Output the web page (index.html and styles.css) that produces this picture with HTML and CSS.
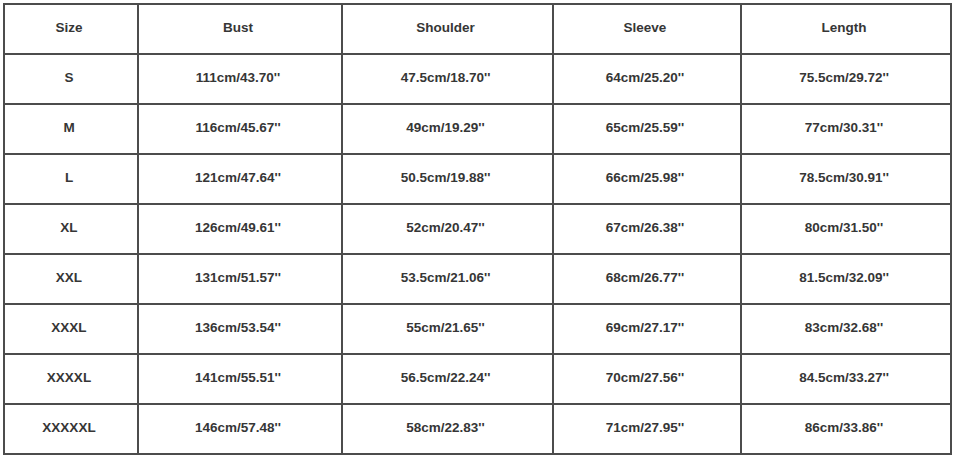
FILE: index.html
```html
<!DOCTYPE html>
<html>
<head>
<meta charset="utf-8">
<link rel="stylesheet" href="styles.css">
</head>
<body>
<div class="chart">
  <div class="cell">Size</div><div class="cell">Bust</div><div class="cell">Shoulder</div><div class="cell">Sleeve</div><div class="cell">Length</div>
  <div class="cell">S</div><div class="cell">111cm/43.70''</div><div class="cell">47.5cm/18.70''</div><div class="cell">64cm/25.20''</div><div class="cell">75.5cm/29.72''</div>
  <div class="cell">M</div><div class="cell">116cm/45.67''</div><div class="cell">49cm/19.29''</div><div class="cell">65cm/25.59''</div><div class="cell">77cm/30.31''</div>
  <div class="cell">L</div><div class="cell">121cm/47.64''</div><div class="cell">50.5cm/19.88''</div><div class="cell">66cm/25.98''</div><div class="cell">78.5cm/30.91''</div>
  <div class="cell">XL</div><div class="cell">126cm/49.61''</div><div class="cell">52cm/20.47''</div><div class="cell">67cm/26.38''</div><div class="cell">80cm/31.50''</div>
  <div class="cell">XXL</div><div class="cell">131cm/51.57''</div><div class="cell">53.5cm/21.06''</div><div class="cell">68cm/26.77''</div><div class="cell">81.5cm/32.09''</div>
  <div class="cell">XXXL</div><div class="cell">136cm/53.54''</div><div class="cell">55cm/21.65''</div><div class="cell">69cm/27.17''</div><div class="cell">83cm/32.68''</div>
  <div class="cell">XXXXL</div><div class="cell">141cm/55.51''</div><div class="cell">56.5cm/22.24''</div><div class="cell">70cm/27.56''</div><div class="cell">84.5cm/33.27''</div>
  <div class="cell">XXXXXL</div><div class="cell">146cm/57.48''</div><div class="cell">58cm/22.83''</div><div class="cell">71cm/27.95''</div><div class="cell">86cm/33.86''</div>
</div>
</body>
</html>
```
FILE: styles.css
```css
html, body {
  margin: 0;
  padding: 0;
  background: #ffffff;
}
body {
  padding: 3px 0 0 3px;
  font-family: "Liberation Sans", Arial, sans-serif;
}
.chart {
  display: grid;
  grid-template-columns: 132px 202px 209px 186px 208px;
  grid-auto-rows: 48px;
  gap: 2px;
  padding: 2px;
  background: #4c4c4c;
  width: max-content;
}
.cell {
  background: #ffffff;
  display: flex;
  align-items: center;
  justify-content: center;
  font-size: 13.5px;
  font-weight: bold;
  color: #363636;
  padding: 0 4px 4px 0;
}
```
